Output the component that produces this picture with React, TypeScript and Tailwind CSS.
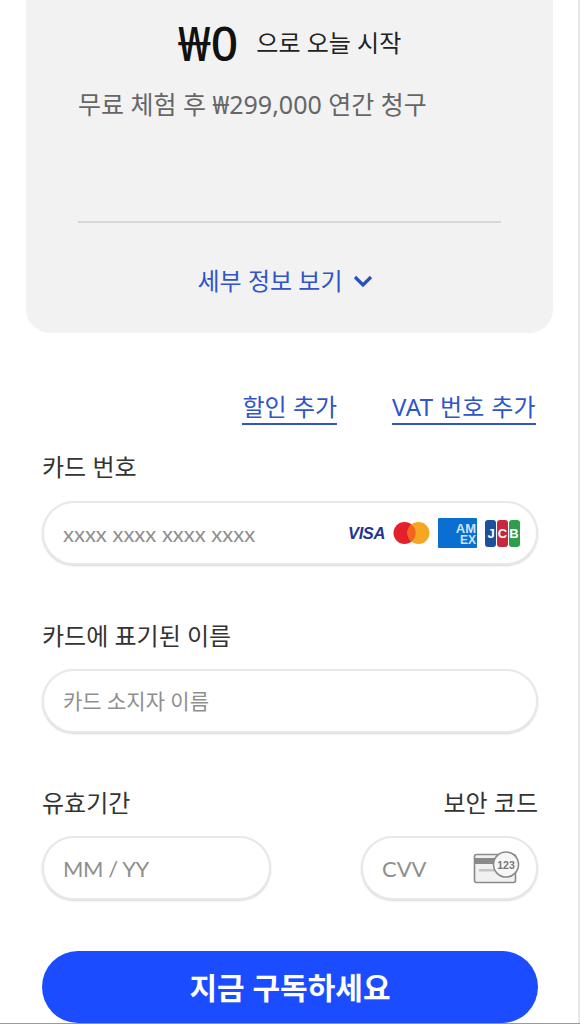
const kr = "font-['Noto_Sans','Noto_Sans_CJK_KR',sans-serif]"

function CardLogos() {
  return (
    <div className="flex items-center gap-[8px]">
      <span className="font-['Liberation_Sans',sans-serif] text-[16.5px] leading-none font-bold italic tracking-[-0.4px] text-[#25358f]">VISA</span>
      <svg width="37" height="22" viewBox="0 0 37 22">
        <circle cx="11.5" cy="11" r="11" fill="#e3202c" />
        <circle cx="25.5" cy="11" r="11" fill="#f5a623" />
        <path d="M18.5 2.4a11 11 0 0 1 0 17.2a11 11 0 0 1 0-17.2z" fill="#f4661e" />
      </svg>
      <svg width="39" height="30" viewBox="0 0 39 30">
        <rect width="39" height="30" rx="1" fill="#0a6fd1" />
        <text x="38" y="15" textAnchor="end" fontSize="13" fontWeight="700" fill="#cfe3f7" fontFamily="Liberation Sans">AM</text>
        <text x="38" y="26" textAnchor="end" fontSize="12" fontWeight="700" fill="#cfe3f7" fontFamily="Liberation Sans">EX</text>
      </svg>
      <svg width="35" height="27" viewBox="0 0 35 27">
        <rect x="0" width="11" height="27" rx="3" fill="#1c4f9c" />
        <rect x="12" width="11" height="27" rx="3" fill="#c8283f" />
        <rect x="24" width="11" height="27" rx="3" fill="#2f9e4a" />
        <text x="6" y="18" fontSize="13" fontWeight="700" fill="#fff" textAnchor="middle" fontFamily="Liberation Sans">J</text>
        <text x="17.5" y="18" fontSize="13" fontWeight="700" fill="#fff" textAnchor="middle" fontFamily="Liberation Sans">C</text>
        <text x="29" y="18" fontSize="13" fontWeight="700" fill="#fff" textAnchor="middle" fontFamily="Liberation Sans">B</text>
      </svg>
    </div>
  )
}

function CvvIcon() {
  return (
    <svg width="47" height="34" viewBox="0 0 47 34">
      <rect x="1.5" y="3.5" width="41" height="28" rx="2" fill="#f1f1f1" stroke="#8a8a8a" strokeWidth="1.6" />
      <rect x="1.5" y="7" width="41" height="6" fill="#8a8a8a" />
      <rect x="6" y="18" width="15" height="2.5" fill="#c4c4c4" />
      <circle cx="33" cy="13.5" r="12.5" fill="#f7f7f7" stroke="#8a8a8a" strokeWidth="1.6" />
      <text x="33" y="17.5" textAnchor="middle" fontSize="10.5" fontWeight="700" fill="#777" fontFamily="Liberation Sans">123</text>
    </svg>
  )
}

function Field({ placeholder, className, textClass, children }: { placeholder: string; className: string; textClass: string; children?: React.ReactNode }) {
  return (
    <div className={`h-[64px] flex items-center justify-between rounded-full bg-white border-2 border-[#e8e8e8] shadow-[0_1px_2px_rgba(0,0,0,0.16)] pl-[19px] ${className}`}>
      <span className={`font-['Lato','Noto_Sans_CJK_KR',sans-serif] text-[#8f8f8f] ${textClass}`}>{placeholder}</span>
      {children}
    </div>
  )
}

export default function App() {
  return (
    <div className={`${kr} relative w-[580px] h-[1024px] overflow-hidden bg-white`}>
      <div className="mx-[26px] w-[527px] h-[333px] rounded-b-[24px] bg-[#f2f2f2] flex flex-col">
        <div className="flex items-center justify-center pt-[23px] h-[62px]">
          <span className="text-[48px] leading-none font-medium text-[#111]">₩0</span>
          <span className="ml-[18px] text-[24px] text-[#222]">으로 오늘 시작</span>
        </div>
        <p className="mt-[25px] ml-[52px] text-[25px] leading-[34px] text-[#666]">무료 체험 후 ₩299,000 연간 청구</p>
        <div className="mt-[100px] mx-[52px] h-[2px] bg-[#d8d8d8]" />
        <div className="mt-[41px] flex items-center justify-center gap-[11px] pr-[8px] text-[24px] leading-[34px] text-[#2f55c8]">
          세부 정보 보기
          <svg width="20" height="14" viewBox="0 0 20 14" fill="none" stroke="#2a4fc0" strokeWidth="3.2">
            <path d="M2 3l8 8l8-8" />
          </svg>
        </div>
      </div>

      <div className="mt-[58px] pr-[44px] flex justify-end gap-[55px] text-[24px] leading-[32px] text-[#2f55c8]">
        <span className="border-b-2 border-[#2f55c8]">할인 추가</span>
        <span className="border-b-2 border-[#2f55c8] tracking-[0.3px]">VAT 번호 추가</span>
      </div>

      <div className="mt-[25px] px-[42px]">
        <p className="text-[24px] leading-[34px] text-[#333]">카드 번호</p>
        <Field placeholder="xxxx xxxx xxxx xxxx" textClass="text-[22px]" className="mt-[17px] pr-[16px]">
          <CardLogos />
        </Field>

        <p className="mt-[54px] text-[24px] leading-[34px] text-[#333]">카드에 표기된 이름</p>
        <Field placeholder="카드 소지자 이름" textClass="text-[21px]" className="mt-[16px]" />

        <div className="mt-[53px] flex justify-between text-[24px] leading-[34px] text-[#333]">
          <span>유효기간</span>
          <span>보안 코드</span>
        </div>
        <div className="mt-[16px] flex justify-between">
          <Field placeholder="MM / YY" textClass="text-[22px] tracking-[-0.4px]" className="w-[229px]" />
          <Field placeholder="CVV" textClass="text-[22px]" className="w-[177px] pr-[16px]">
            <CvvIcon />
          </Field>
        </div>

        <button className="mt-[51px] w-full h-[72px] rounded-full bg-[#1c4cff] text-white text-[30px] font-bold">지금 구독하세요</button>
      </div>

      <div className="absolute top-0 right-0 h-full w-[2px] bg-[#e8e8e8]" />
      <div className="absolute bottom-0 left-0 w-full h-[1px] bg-[#9a9a9a]" />
    </div>
  )
}
